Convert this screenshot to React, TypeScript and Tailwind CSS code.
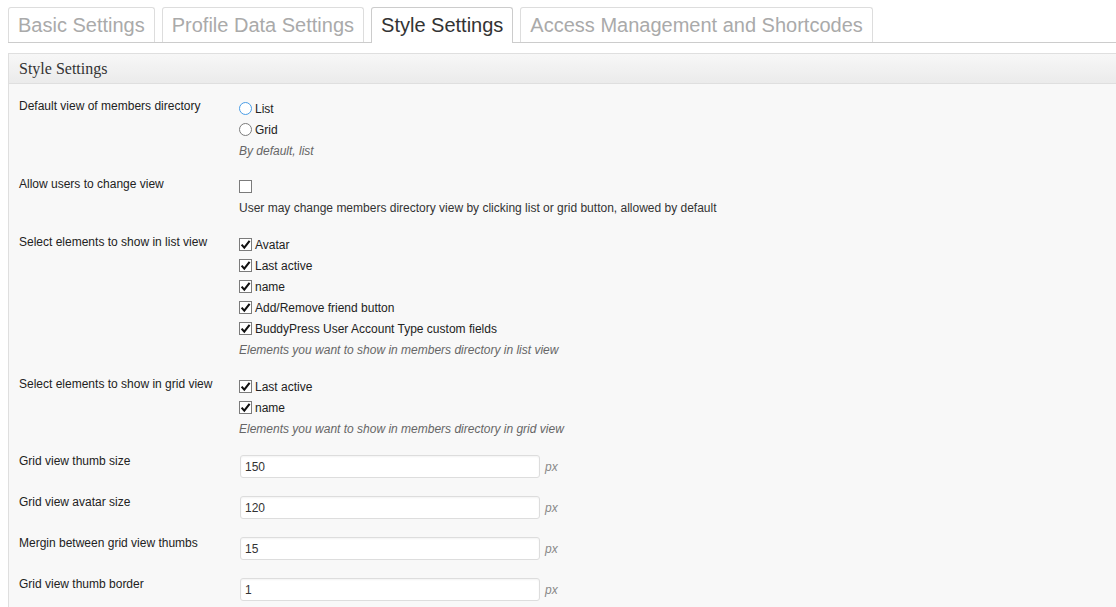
import type { ReactNode } from 'react';

const tabs = ['Basic Settings', 'Profile Data Settings', 'Style Settings', 'Access Management and Shortcodes'];

// small checkbox drawn like the old WP admin one
const Check = ({ checked }: { checked: boolean }) => (
  <span className="w-[13px] h-[13px] border border-[#7b7b7b] bg-white flex items-center justify-center shrink-0">
    {checked && (
      <svg width="11" height="11" viewBox="0 0 11 11">
        <path d="M1.6 5.6 L4.3 8.6 L9.6 1.9" stroke="#111" strokeWidth="2.1" fill="none" strokeLinejoin="miter" />
      </svg>
    )}
  </span>
);

const Radio = ({ focused }: { focused?: boolean }) => (
  <span
    className={
      focused
        ? 'w-[13px] h-[13px] rounded-full border border-[#4a9de6] bg-white shrink-0'
        : 'w-[13px] h-[13px] rounded-full border border-[#7b7b7b] bg-white shrink-0'
    }
  />
);

const Line = ({ children }: { children: ReactNode }) => (
  <div className="h-[21px] flex items-center gap-[3px] text-[12px] text-[#222]">{children}</div>
);

const Desc = ({ children, italic = true }: { children: ReactNode; italic?: boolean }) => (
  <div className={italic ? 'h-[21px] flex items-center text-[12px] italic text-[#666]' : 'h-[21px] flex items-center text-[12px] text-[#333]'}>
    {children}
  </div>
);

const Row = ({ label, children }: { label: string; children: ReactNode }) => (
  <div className="flex">
    <div className="w-[220px] shrink-0 text-[12px] leading-4 text-[#222]">{label}</div>
    <div className="flex flex-col">{children}</div>
  </div>
);

const NumberRow = ({ label, value, desc }: { label: string; value: string; desc?: string }) => (
  <Row label={label}>
    <div className="flex items-center gap-[5px] mt-[2px] pl-[1px]">
      <div className="w-[300px] h-[23px] bg-white border border-[#dddddd] rounded-[3px] shadow-[inset_0_1px_2px_rgba(0,0,0,0.05)] flex items-center px-[4px] text-[12px] text-[#333]">
        {value}
      </div>
      <span className="text-[12px] italic text-[#888]">px</span>
    </div>
    {desc && <Desc>{desc}</Desc>}
  </Row>
);

export default function App() {
  return (
    <div className="min-h-screen bg-white overflow-hidden font-['Liberation_Sans',Arial,sans-serif]">
      {/* Tabs */}
      <div className="ml-2 pt-[7px] flex items-end gap-[7px] border-b border-[#cccccc]">
        {tabs.map((t) => {
          const active = t === 'Style Settings';
          return (
            <div
              key={t}
              className={
                active
                  ? 'h-[36px] -mb-px bg-white border border-b-0 border-[#cccccc] rounded-t-[3px] px-[9px] leading-[34px] text-[20px] text-[#333]'
                  : 'h-[35px] bg-white border border-b-0 border-[#dddddd] rounded-t-[3px] px-[9px] leading-[34px] text-[20px] text-[#aaaaaa]'
              }
            >
              {t}
            </div>
          );
        })}
      </div>

      {/* Settings panel */}
      <div className="ml-2 mt-[10px] border border-r-0 border-[#dfdfdf] bg-[#f8f8f8]">
        <div className="h-[30px] px-[10px] flex items-center bg-gradient-to-b from-[#f7f7f7] to-[#ebebeb] border-b border-[#dfdfdf] font-['Liberation_Serif',Georgia,serif] text-[16px] text-[#333]">
          Style Settings
        </div>

        <div className="px-[10px] pt-[14px] pb-6 flex flex-col gap-[15px]">
          <Row label="Default view of members directory">
            <Line>
              <Radio focused />
              List
            </Line>
            <Line>
              <Radio />
              Grid
            </Line>
            <Desc>By default, list</Desc>
          </Row>

          <Row label="Allow users to change view">
            <Line>
              <Check checked={false} />
            </Line>
            <Desc italic={false}>User may change members directory view by clicking list or grid button, allowed by default</Desc>
          </Row>

          <div className="mt-px">
            <Row label="Select elements to show in list view">
              <Line>
                <Check checked />
                Avatar
              </Line>
              <Line>
                <Check checked />
                Last active
              </Line>
              <Line>
                <Check checked />
                name
              </Line>
              <Line>
                <Check checked />
                Add/Remove friend button
              </Line>
              <Line>
                <Check checked />
                BuddyPress User Account Type custom fields
              </Line>
              <Desc>Elements you want to show in members directory in list view</Desc>
            </Row>
          </div>

          <div className="mt-px">
            <Row label="Select elements to show in grid view">
              <Line>
                <Check checked />
                Last active
              </Line>
              <Line>
                <Check checked />
                name
              </Line>
              <Desc>Elements you want to show in members directory in grid view</Desc>
            </Row>
          </div>

          <div className="-mt-px flex flex-col gap-[16px]">
            <NumberRow label="Grid view thumb size" value="150" />
            <NumberRow label="Grid view avatar size" value="120" />
            <NumberRow label="Mergin between grid view thumbs" value="15" />
            <NumberRow label="Grid view thumb border" value="1" desc="Input 0 to remove the border" />
          </div>
        </div>
      </div>
    </div>
  );
}
